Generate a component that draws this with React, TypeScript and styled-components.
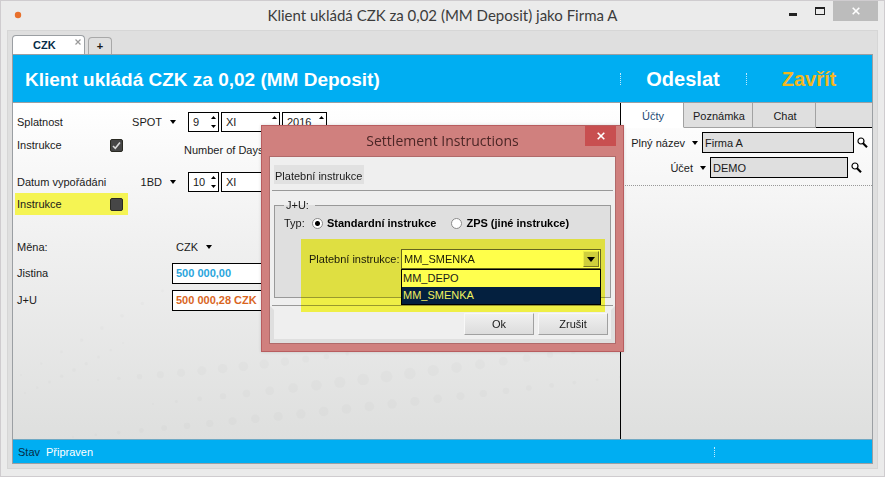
import React, { useState } from "react";
import styled, { createGlobalStyle, css } from "styled-components";

const GlobalStyle = createGlobalStyle`
  *, *::before, *::after { box-sizing: border-box; }
  body { margin: 0; }
  body, button, input, select {
    font-family: "Liberation Sans", Arial, sans-serif;
    font-size: 11px;
    line-height: 16px;
    color: #1a1a1a;
  }
  button, input, select { margin: 0; padding: 0; border: 0; background: none; border-radius: 0; }
  select { appearance: none; }
  ul { margin: 0; padding: 0; list-style: none; }
`;

const BLUE = "#00aef2";
const LINE = "#9b9fa3";

const Window = styled.div`
  position: relative;
  display: flex;
  flex-direction: column;
  min-height: 100vh;
  padding: 0 6px 7px;
  border: 1px solid #cfcccf;
  background: #ebebeb;
`;

const TitleBar = styled.header`
  display: grid;
  grid-template-columns: 140px 1fr 140px;
  height: 29px;
`;

const AppDot = styled.svg`
  width: 8px;
  height: 8px;
  margin: 10px 0 0 7px;
`;

const TitleText = styled.h1`
  margin: 0;
  text-align: center;
  font: 400 15px/28px Lato, "Open Sans", sans-serif;
  color: #3c3c3c;
  white-space: nowrap;
`;

const WindowButtons = styled.div`
  display: flex;
  justify-content: flex-end;
  align-items: flex-start;
`;

const WindowButton = styled.button<{ $filled?: boolean }>`
  display: grid;
  place-items: center;
  width: ${(p) => (p.$filled ? 45 : 27)}px;
  height: 20px;
  background: ${(p) => (p.$filled ? "#bcbcbc" : "transparent")};
`;

const Frame = styled.div`
  flex: 1;
  display: flex;
  flex-direction: column;
  padding: 4px;
  border: 1px solid #d6d6d6;
  background: #dfdfdf;
`;

const TabStrip = styled.nav`
  display: flex;
  align-items: flex-end;
  gap: 3px;
  height: 19px;
`;

const DocTab = styled.div`
  display: flex;
  justify-content: space-between;
  width: 73px;
  height: 19px;
  padding: 0 3px 0 20px;
  border: 1px solid ${LINE};
  border-bottom: 0;
  border-radius: 4px 4px 0 0;
  background: #fff;
`;

const DocTabName = styled.button`
  font-weight: 700;
  color: #062c47;
`;

const DocTabClose = styled.button`
  display: flex;
  padding-top: 3px;
`;

const AddTab = styled.button`
  width: 24px;
  height: 17px;
  border: 1px solid #a8a8a8;
  border-bottom: 0;
  border-radius: 4px 4px 0 0;
  font-weight: 700;
  line-height: 14px;
`;

const Content = styled.div`
  flex: 1;
  display: flex;
  flex-direction: column;
  border: 1px solid ${LINE};
`;

const Banner = styled.div`
  display: flex;
  align-items: center;
  height: 48px;
  border-bottom: 1px solid ${LINE};
  background: ${BLUE};
`;

const BannerTitle = styled.h2`
  flex: 1;
  margin: 0;
  padding: 3px 0 0 12px;
  font-size: 19px;
  line-height: 24px;
  color: #fff;
`;

const BannerButton = styled.button<{ $accent?: boolean }>`
  display: flex;
  align-items: center;
  width: 126px;
  padding-right: 1px;
  font-size: 20px;
  font-weight: 700;
  line-height: 24px;
  color: ${(p) => (p.$accent ? "#f3b71f" : "#fff")};

  &::before {
    content: "";
    height: 12px;
    border-left: 1px dotted #bfeaff;
  }
  span { flex: 1; }
`;

const Body = styled.main`
  flex: 1;
  display: flex;
  background: linear-gradient(#ffffff, #f0f0f0 42%, #dedfde);
`;

const FormPane = styled.form`
  position: relative;
  flex: 1;
  padding: 9px 2px;
`;

const Backdrop = styled.svg`
  position: absolute;
  left: 0;
  top: 0;
  width: 100%;
  height: 100%;
  fill: #000;
  fill-opacity: 0.015;
`;

const Row = styled.div<{ $height: number; $gap?: number }>`
  position: relative;
  display: flex;
  align-items: center;
  height: ${(p) => p.$height}px;
  margin-top: ${(p) => p.$gap ?? 0}px;
`;

const Label = styled.label<{ $width: number }>`
  width: ${(p) => p.$width}px;
  padding-left: 2px;
  white-space: nowrap;
`;

const CheckCell = styled.div<{ $marked?: boolean }>`
  display: flex;
  align-items: center;
  height: 22px;
  width: 113px;
  background: ${(p) => (p.$marked ? "#f5f453" : "transparent")};
`;

const Check = styled.input`
  appearance: none;
  width: 13px;
  height: 13px;
  margin: 0;
  border: 1px solid #2a2a22;
  border-radius: 2px;
  background: #464646;
`;

const CheckWrap = styled.span`
  position: relative;
  display: flex;

  svg {
    position: absolute;
    inset: 0;
    pointer-events: none;
  }
  input:not(:checked) + svg { display: none; }
`;

const DaysLabel = styled.span`
  align-self: flex-end;
  padding-left: 56px;
`;

const arrow = css`
  &::after {
    content: "";
    width: 0;
    height: 0;
    border: 3px solid transparent;
    border-top: 4px solid #000;
    border-bottom: 0;
  }
`;

const Drop = styled.span<{ $width: number }>`
  display: flex;
  align-items: center;
  justify-content: flex-end;
  gap: 8px;
  width: ${(p) => p.$width}px;
  ${arrow}

  select { text-align: right; }
`;

const SpinGroup = styled.div`
  display: flex;
  gap: 2px;
  padding-left: 12px;
`;

const SpinBox = styled.div<{ $width: number }>`
  display: flex;
  width: ${(p) => p.$width}px;
  height: 20px;
  padding: 0 2px 0 4px;
  border: 1px solid #000;
  background: #fff;

  input { flex: 1; min-width: 0; }
`;

const SpinButtons = styled.span`
  display: flex;
  flex-direction: column;
  justify-content: space-between;
  padding: 3px 0;

  button { display: flex; }
`;

const Amount = styled.input<{ $color: string }>`
  width: 154px;
  height: 21px;
  padding: 0 3px;
  border: 1px solid #000;
  background: #fff;
  font-weight: 700;
  color: ${(p) => p.$color};
`;

const SidePane = styled.aside`
  width: 252px;
  border-left: 1px solid #000;
`;

const SideTabs = styled.div`
  display: flex;
  height: 25px;

  &::after {
    content: "";
    flex: 1;
    border-bottom: 1px solid #000;
    background: #dfdfdf;
  }
`;

const SideTab = styled.button<{ $width: number; $active?: boolean }>`
  width: ${(p) => p.$width}px;
  padding: 2px 0 0 2px;
  border-right: 1px solid #a2a2a2;
  border-bottom: 1px solid ${(p) => (p.$active ? "#fff" : "#a2a2a2")};
  background: ${(p) => (p.$active ? "#fff" : "#dfdfdf")};
  color: ${(p) => (p.$active ? "#1d4a75" : "#1a1a1a")};
`;

const SideFields = styled.div`
  display: flex;
  flex-direction: column;
  gap: 4px;
  padding: 4px 4px 7px 10px;
  border-bottom: 1px dotted #999;
`;

const SideRow = styled.div<{ $inset?: boolean }>`
  display: flex;
  align-items: center;
  justify-content: flex-end;
  padding-right: ${(p) => (p.$inset ? 6 : 0)}px;
`;

const SideLabel = styled.label`
  display: flex;
  align-items: center;
  gap: 7px;
  padding-right: 4px;
  white-space: nowrap;
  ${arrow}
`;

const SideInput = styled.input<{ $width: number }>`
  width: ${(p) => p.$width}px;
  height: 21px;
  padding: 0 2px;
  border: 1px solid #000;
  background: #dfdfdf;
`;

const SearchButton = styled.button`
  display: flex;
  padding-left: 3px;
`;

const StatusBar = styled.footer`
  display: flex;
  align-items: center;
  gap: 6px;
  height: 24px;
  padding: 0 157px 0 5px;
  border-top: 1px solid #6fa9c4;
  background: ${BLUE};
  color: #062c47;
`;

const StatusValue = styled.output`
  flex: 1;
  color: #fff;
`;

const StatusMark = styled.span`
  height: 10px;
  border-left: 1px dotted #bfeaff;
`;

const Dialog = styled.section`
  position: absolute;
  inset: 0;
  isolation: isolate;
  width: 363px;
  height: fit-content;
  margin: auto;
  padding: 0 7px 7px;
  border: 1px solid #b85d5f;
  background: #d0807e;
  box-shadow: 0 0 3px rgba(0, 0, 0, 0.15);
`;

const DialogBar = styled.header`
  display: grid;
  grid-template-columns: 31px 1fr 31px;
  height: 30px;
`;

const DialogTitle = styled.h2`
  grid-column: 2;
  margin: 0;
  text-align: center;
  font: 400 14px/30px "Open Sans", "Noto Sans", sans-serif;
  color: #4c2626;
`;

const DialogClose = styled.button`
  display: grid;
  place-items: center;
  height: 20px;
  background: #c84f50;
`;

const DialogBody = styled.div`
  border: 1px solid #b06a6a;
  background: #efefef;
`;

const DialogTop = styled.div`
  height: 34px;
  margin: 0 2px;
  padding: 8px 2px 0;
  border-bottom: 1px solid #999;
`;

const Chip = styled.span`
  display: inline-block;
  padding: 3px 2px 0 1px;
  background: #e1e1e1;
`;

const DialogMain = styled.div`
  height: 115px;
  margin: 0 2px;
  padding: 6px 2px 0;
  border-bottom: 1px solid #999;
`;

const Group = styled.fieldset`
  position: relative;
  height: 101px;
  margin: 0;
  padding: 0 9px;
  border: 1px solid #999;
  background: #dfdfdf;

  legend { padding: 0 6px 0 2px; }
`;

const TypeRow = styled.div`
  display: flex;
  align-items: center;
  height: 20px;
`;

const TypeLabel = styled.span`
  width: 28px;
`;

const RadioLabel = styled.label`
  display: flex;
  align-items: center;
  gap: 4px;
  margin-right: 15px;
  font-weight: 700;
  color: #000;
`;

const Radio = styled.input`
  appearance: none;
  width: 11px;
  height: 11px;
  border: 1px solid #8a8a8a;
  border-radius: 50%;
  background: #fff;

  &:checked { background: radial-gradient(circle, #000 2px, #fff 3px); }
`;

const ComboRow = styled.div`
  display: flex;
  align-items: center;
  justify-content: space-between;
  padding: 16px 0 0 25px;
  white-space: nowrap;
`;

const Combo = styled.div`
  position: relative;
  width: 200px;
`;

const ComboField = styled.div`
  display: flex;
  height: 20px;
  padding: 1px;
  border: 1px solid #666;
  background: #fff;

  select { flex: 1; padding-left: 1px; }
`;

const ComboArrow = styled.span`
  display: flex;
  align-items: center;
  justify-content: center;
  width: 16px;
  border: 1px solid #777;
  border-top-color: #eee;
  border-left-color: #eee;
  background: #cfcfcf;
  ${arrow}

  &::after { border-width: 5px 4px 0; }
`;

const Options = styled.ul`
  position: absolute;
  z-index: 2;
  top: 20px;
  left: 0;
  width: 100%;
  border: 1px solid #000;
  background: #ffff4e;
`;

const Option = styled.li<{ $selected?: boolean }>`
  padding-left: 1px;
  line-height: 17px;
  background: ${(p) => (p.$selected ? "#04203f" : "transparent")};
  color: ${(p) => (p.$selected ? "#f0f060" : "#1a1a1a")};
`;

const Marker = styled.div`
  position: absolute;
  z-index: 1;
  left: 26px;
  right: 5px;
  top: 26px;
  height: 73px;
  background: #ffff4a;
  mix-blend-mode: multiply;
  pointer-events: none;
`;

const DialogActions = styled.div`
  display: flex;
  justify-content: flex-end;
  gap: 4px;
  padding: 3px 3px 4px;
  border: 4px solid #dfdfdf;
  border-top: 4px solid #efefef;
`;

const ActionButton = styled.button`
  width: 70px;
  height: 22px;
  border: 1px solid #a0a0a0;
  border-top-color: #f8f8f8;
  border-left-color: #f8f8f8;
  background: linear-gradient(#f0f0f0, #dcdcdc);
`;

const Cross = ({ size, color, width }: { size: number; color: string; width: number }) => (
  <svg width={size} height={size} viewBox="0 0 8 8" stroke={color} strokeWidth={width} aria-hidden="true">
    <path d="M0.7 0.7 7.3 7.3M7.3 0.7 0.7 7.3" />
  </svg>
);

const Magnifier = () => (
  <svg width="11" height="12" viewBox="0 0 11 12" fill="none" stroke="#000" aria-hidden="true">
    <circle cx="4" cy="4" r="3" fill="#fff" strokeWidth="1.2" />
    <path d="M6 6.3 10 10.3" strokeWidth="2.2" />
  </svg>
);

const Spin = ({ name, initial, width }: { name: string; initial: string; width: number }) => {
  const [value, setValue] = useState(initial);
  const step = (delta: number) => {
    const n = Number(value);
    if (!Number.isNaN(n)) setValue(String(n + delta));
  };
  return (
    <SpinBox $width={width}>
      <input aria-label={name} value={value} onChange={(e) => setValue(e.target.value)} />
      <SpinButtons>
        <button type="button" aria-label={`${name} +`} onClick={() => step(1)}>
          <svg width="5" height="3" viewBox="0 0 5 3"><path d="M0 3 2.5 0 5 3z" /></svg>
        </button>
        <button type="button" aria-label={`${name} −`} onClick={() => step(-1)}>
          <svg width="5" height="3" viewBox="0 0 5 3"><path d="M0 0 2.5 3 5 0z" /></svg>
        </button>
      </SpinButtons>
    </SpinBox>
  );
};

const CheckField = ({ id, marked, on }: { id: string; marked?: boolean; on?: boolean }) => (
  <CheckCell $marked={marked}>
    <Label htmlFor={id} $width={95}>Instrukce</Label>
    <CheckWrap>
      <Check id={id} type="checkbox" defaultChecked={on} />
      <svg width="13" height="13" viewBox="0 0 13 13" fill="none" stroke="#d8d8d8" strokeWidth="1.6" aria-hidden="true">
        <path d="M3 7 5.3 9.3 10 3.6" />
      </svg>
    </CheckWrap>
  </CheckCell>
);

const DateRow = ({ id, label, term, day, gap }: { id: string; label: string; term: string; day: string; gap?: number }) => (
  <Row $height={20} $gap={gap}>
    <Label htmlFor={id} $width={101}>{label}</Label>
    <Drop $width={60}>
      <select id={id}><option>{term}</option></select>
    </Drop>
    <SpinGroup>
      <Spin name={`${label} den`} initial={day} width={31} />
      <Spin name={`${label} měsíc`} initial="XI" width={59} />
      <Spin name={`${label} rok`} initial="2016" width={45} />
    </SpinGroup>
  </Row>
);

// Faint bands of dots rising to the right: start, end, count, largest radius.
const bands = [
  [8, 272, 190, 162, 10, 2],
  [12, 290, 110, 240, 9, 2],
  [85, 277, 355, 248, 14, 5],
  [140, 301, 607, 242, 21, 6],
  [60, 334, 607, 274, 25, 5],
];

const Dots = () => (
  <Backdrop aria-hidden="true">
    {bands.map(([x1, y1, x2, y2, n, r], b) =>
      Array.from({ length: n }, (_, i) => {
        const t = i / (n - 1);
        return (
          <circle
            key={`${b}-${i}`}
            cx={x1 + (x2 - x1) * t}
            cy={y1 + (y2 - y1) * t + 8 * t * (1 - t)}
            r={1 + (r - 1) * Math.sin(Math.PI * t)}
          />
        );
      })
    )}
  </Backdrop>
);

const SideField = ({ id, label, value, width, inset }: { id: string; label: string; value: string; width: number; inset?: boolean }) => (
  <SideRow $inset={inset}>
    <SideLabel htmlFor={id}>{label}</SideLabel>
    <SideInput id={id} $width={width} defaultValue={value} />
    <SearchButton type="button" aria-label={`Hledat ${label}`}><Magnifier /></SearchButton>
  </SideRow>
);

const InstructionsDialog = () => {
  const [choice, setChoice] = useState("MM_SMENKA");
  const options = ["MM_DEPO", "MM_SMENKA"];
  return (
    <Dialog role="dialog" aria-labelledby="dialog-title">
      <DialogBar>
        <DialogTitle id="dialog-title">Settlement Instructions</DialogTitle>
        <DialogClose type="button" aria-label="Zavřít okno"><Cross size={8} color="#fff" width={1.6} /></DialogClose>
      </DialogBar>
      <DialogBody>
        <DialogTop><Chip>Platební instrukce</Chip></DialogTop>
        <DialogMain>
          <Group>
            <legend>J+U:</legend>
            <TypeRow>
              <TypeLabel>Typ:</TypeLabel>
              <RadioLabel><Radio type="radio" name="kind" defaultChecked />Standardní instrukce</RadioLabel>
              <RadioLabel><Radio type="radio" name="kind" />ZPS (jiné instrukce)</RadioLabel>
            </TypeRow>
            <ComboRow>
              <label htmlFor="instruction">Platební instrukce:</label>
              <Combo>
                <ComboField>
                  <select id="instruction" value={choice} onChange={(e) => setChoice(e.target.value)}>
                    {options.map((o) => <option key={o}>{o}</option>)}
                  </select>
                  <ComboArrow />
                </ComboField>
                <Options role="listbox" aria-label="Platební instrukce">
                  {options.map((o) => (
                    <Option key={o} role="option" aria-selected={o === choice} $selected={o === choice} onClick={() => setChoice(o)}>
                      {o}
                    </Option>
                  ))}
                </Options>
              </Combo>
            </ComboRow>
            <Marker />
          </Group>
        </DialogMain>
        <DialogActions>
          <ActionButton type="button">Ok</ActionButton>
          <ActionButton type="button">Zrušit</ActionButton>
        </DialogActions>
      </DialogBody>
    </Dialog>
  );
};

export default function App() {
  return (
    <>
      <GlobalStyle />
      <Window>
        <TitleBar>
          <AppDot viewBox="0 0 8 8" aria-hidden="true"><circle cx="4" cy="4" r="3.2" fill="#e8702c" /></AppDot>
          <TitleText>Klient ukládá CZK za 0,02 (MM Deposit) jako Firma A</TitleText>
          <WindowButtons>
            <WindowButton type="button" aria-label="Minimalizovat">
              <svg width="8" height="10" viewBox="0 0 8 10"><path d="M0 7h8v3H0z" fill="#222" /></svg>
            </WindowButton>
            <WindowButton type="button" aria-label="Maximalizovat">
              <svg width="10" height="8" viewBox="0 0 10 8"><path d="M0 0h10v8H0zM1 2v5h8V2z" fill="#222" fillRule="evenodd" /></svg>
            </WindowButton>
            <WindowButton type="button" aria-label="Zavřít" $filled><Cross size={8} color="#fff" width={1.6} /></WindowButton>
          </WindowButtons>
        </TitleBar>
        <Frame>
          <TabStrip>
            <DocTab>
              <DocTabName type="button">CZK</DocTabName>
              <DocTabClose type="button" aria-label="Zavřít kartu"><Cross size={6} color="#999" width={1.6} /></DocTabClose>
            </DocTab>
            <AddTab type="button">+</AddTab>
          </TabStrip>
          <Content>
            <Banner>
              <BannerTitle>Klient ukládá CZK za 0,02 (MM Deposit)</BannerTitle>
              <BannerButton type="button"><span>Odeslat</span></BannerButton>
              <BannerButton type="button" $accent><span>Zavřít</span></BannerButton>
            </Banner>
            <Body>
              <FormPane>
                <Dots />
                <DateRow id="maturity" label="Splatnost" term="SPOT" day="9" />
                <Row $height={26}>
                  <CheckField id="maturity-instr" on />
                  <DaysLabel>Number of Days</DaysLabel>
                </Row>
                <DateRow id="settlement" label="Datum vypořádáni" term="1BD" day="10" gap={14} />
                <Row $height={22} $gap={1}><CheckField id="settlement-instr" marked /></Row>
                <Row $height={20} $gap={22}>
                  <Label htmlFor="currency" $width={137}>Měna:</Label>
                  <Drop $width={60}>
                    <select id="currency"><option>CZK</option></select>
                  </Drop>
                </Row>
                <Row $height={22} $gap={5}>
                  <Label htmlFor="principal" $width={157}>Jistina</Label>
                  <Amount id="principal" $color="#2aa5dc" defaultValue="500 000,00" />
                </Row>
                <Row $height={22} $gap={5}>
                  <Label htmlFor="total" $width={157}>J+U</Label>
                  <Amount id="total" $color="#d9661f" defaultValue="500 000,28 CZK" />
                </Row>
              </FormPane>
              <SidePane>
                <SideTabs>
                  <SideTab type="button" $width={63} $active>Účty</SideTab>
                  <SideTab type="button" $width={69}>Poznámka</SideTab>
                  <SideTab type="button" $width={63}>Chat</SideTab>
                </SideTabs>
                <SideFields>
                  <SideField id="full-name" label="Plný název" value="Firma A" width={152} />
                  <SideField id="account" label="Účet" value="DEMO" width={138} inset />
                </SideFields>
              </SidePane>
            </Body>
            <StatusBar>
              <span>Stav</span>
              <StatusValue>Připraven</StatusValue>
              <StatusMark />
            </StatusBar>
          </Content>
        </Frame>
        <InstructionsDialog />
      </Window>
    </>
  );
}
